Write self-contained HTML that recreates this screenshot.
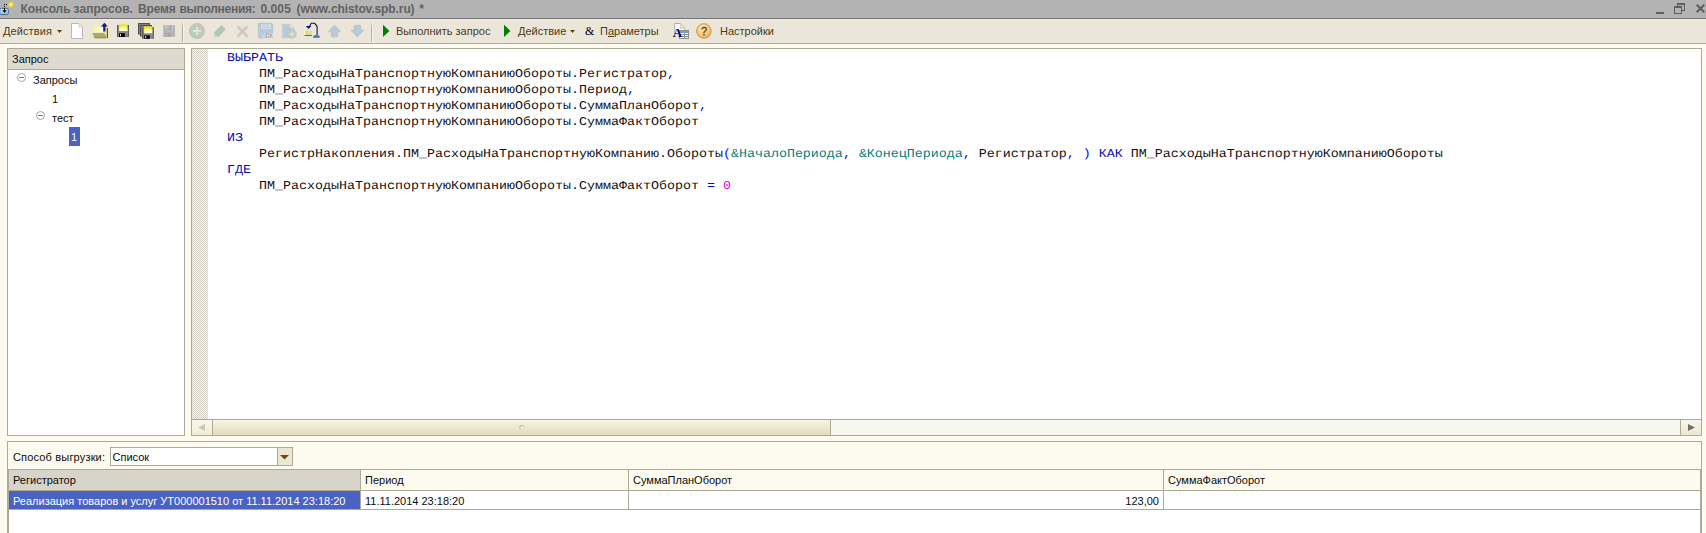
<!DOCTYPE html>
<html lang="ru">
<head>
<meta charset="utf-8">
<title>Консоль запросов</title>
<style>
*{box-sizing:border-box;margin:0;padding:0}
html,body{width:1706px;height:533px;overflow:hidden;background:#fdfbf0}
body{position:relative;font-family:"Liberation Sans",sans-serif;font-size:11px;color:#0c0c0c}
.abs{position:absolute}
.t{position:absolute;white-space:nowrap;line-height:14px;height:14px}
.tb{color:#4b3c14}
#titlebar{left:0;top:0;width:1706px;height:18px;background:#b3b3b3}
#titleline{left:0;top:18px;width:1706px;height:1px;background:#727272}
#title{font-weight:bold;color:#626262;font-size:12px}
#toolbar{left:0;top:19px;width:1706px;height:24px;background:#ece5d9;border-top:1px solid #f1ede4;border-bottom:1px solid #f0ecdd}
#toolline{left:0;top:43px;width:1706px;height:1px;background:#b0aa8f}
.sep{position:absolute;top:22px;width:1px;height:19px;background:#c4bda9}
.bd{border:1px solid #aea995}
#left{left:7px;top:48px;width:178px;height:388px;background:#fff}
#lefthead{left:8px;top:49px;width:176px;height:20px;background:#dedacf}
#leftheadline{left:8px;top:69px;width:176px;height:1px;background:#aea995}
#editor{left:191px;top:48px;width:1511px;height:388px;background:#fff}
#gutter{left:192px;top:49px;width:16px;height:370px;background:#e5e2db;
 background-image:conic-gradient(#d6d2c8 25%,#f6f5f1 0 50%,#d6d2c8 0 75%,#f6f5f1 0);background-size:2px 2px}
#code{left:0;top:0}
.cl{position:absolute;left:211px;height:18px;font-family:"Liberation Mono",monospace;font-size:13.3333px;line-height:18px;white-space:pre;color:#111;transform:scaleY(0.9);transform-origin:0 0;text-rendering:geometricPrecision}
.kw{color:#0a0ab4}.pr{color:#008080}.op{color:#0000ff}.nm{color:#e000e0}
#hs{left:192px;top:419px;width:1509px;height:16px;background:#f8f8f3;border-top:1px solid #aea995}
#hsl{left:192px;top:420px;width:20px;height:15px;background:linear-gradient(#f9f7ec,#f0ecd9)}
#hslb{left:212px;top:420px;width:1px;height:15px;background:#aea995}
#thumb{left:213px;top:420px;width:617px;height:15px;background:linear-gradient(#f8f6ea 0,#f3f0de 2px,#e3ddbc)}
#thumbb{left:830px;top:420px;width:1px;height:15px;background:#aea995}
#hsrb{left:1680px;top:420px;width:1px;height:15px;background:#aea995}
#hsr{left:1681px;top:420px;width:20px;height:15px;background:linear-gradient(#f8f6ea,#ece7d0)}
#bottom{left:7px;top:441px;width:1695px;height:100px;background:#fdfbf0}
#combo{left:110px;top:447px;width:183px;height:19px;background:#fff}
#combobtn{left:277px;top:448px;width:15px;height:17px;background:#ece6d4;border-left:1px solid #aea995}
#table{left:8px;top:469px;width:1694px;height:70px;background:#fff;border-left:1px solid #aea995;border-top:1px solid #aea995;border-right:2px solid #aea995}
#thead{left:9px;top:470px;width:1691px;height:20px;background:#fdfbef}
#th1{left:9px;top:470px;width:351px;height:20px;background:#d8d4c9}
.hl{position:absolute;height:1px;background:#aea995}
.vl{position:absolute;width:1px;background:#aea995}
#sel{left:9px;top:491px;width:351px;height:18px;background:#4962c3}
svg{position:absolute;left:0;top:0;overflow:visible}
</style>
</head>
<body>
<div class="abs" id="titlebar"></div>
<div class="abs" id="titleline"></div>
<div id="title"><span class="t" style="left:20.5px;top:2px;letter-spacing:-0.1px">Консоль</span><span class="t" style="left:73.6px;top:2px;letter-spacing:0.05px">запросов.</span><span class="t" style="left:138px;top:2px;letter-spacing:-0.15px">Время</span><span class="t" style="left:179.4px;top:2px;letter-spacing:-0.27px">выполнения:</span><span class="t" style="left:260.4px;top:2px;letter-spacing:0.1px">0.005</span><span class="t" style="left:296.5px;top:2px;letter-spacing:-0.1px">(www.chistov.spb.ru)</span><span class="t" style="left:419.3px;top:2px;letter-spacing:0px">*</span></div>
<div class="abs" id="toolbar"></div>
<div class="abs" id="toolline"></div>



<div class="t tb" style="left:3px;top:24px;letter-spacing:0.1px">Действия</div>
<div class="t tb" style="left:396px;top:24px">Выполнить запрос</div>
<div class="t tb" style="left:518px;top:24px">Действие</div>
<div class="t" style="left:585px;top:24px;font-family:'Liberation Serif',serif;font-size:12px;color:#000">&amp;</div>
<div class="t tb" style="left:600px;top:24px">П<u>а</u>раметры</div>
<div class="t tb" style="left:720px;top:24px">Настройки</div>

<div class="abs bd" id="left"></div>
<div class="abs" id="lefthead"></div>
<div class="abs" id="leftheadline"></div>
<div class="t" style="left:12px;top:52px">Запрос</div>
<div class="t" style="left:33px;top:73px">Запросы</div>
<div class="t" style="left:52px;top:92px">1</div>
<div class="t" style="left:52px;top:111px">тест</div>
<div class="abs" style="left:69px;top:127px;width:11px;height:19px;background:#4962c3"></div>
<div class="t" style="left:71px;top:130px;color:#fff">1</div>

<div class="abs bd" id="editor"></div>
<div class="abs" id="gutter"></div>
<div class="abs" id="code"><div class="cl" style="top:51px"><span class="kw">  ВЫБРАТЬ</span></div><div class="cl" style="top:67px">      ПМ_РасходыНаТранспортнуюКомпаниюОбороты.Регистратор<span class="op">,</span></div><div class="cl" style="top:83px">      ПМ_РасходыНаТранспортнуюКомпаниюОбороты.Период<span class="op">,</span></div><div class="cl" style="top:99px">      ПМ_РасходыНаТранспортнуюКомпаниюОбороты.СуммаПланОборот<span class="op">,</span></div><div class="cl" style="top:115px">      ПМ_РасходыНаТранспортнуюКомпаниюОбороты.СуммаФактОборот</div><div class="cl" style="top:131px"><span class="kw">  ИЗ</span></div><div class="cl" style="top:147px">      РегистрНакопления.ПМ_РасходыНаТранспортнуюКомпанию.Обороты<span class="op">(</span><span class="pr">&amp;НачалоПериода</span><span class="op">,</span> <span class="pr">&amp;КонецПериода</span><span class="op">,</span> Регистратор<span class="op">,</span> <span class="op">)</span> <span class="kw">КАК</span> ПМ_РасходыНаТранспортнуюКомпаниюОбороты</div><div class="cl" style="top:163px"><span class="kw">  ГДЕ</span></div><div class="cl" style="top:179px">      ПМ_РасходыНаТранспортнуюКомпаниюОбороты.СуммаФактОборот <span class="op">=</span> <span class="nm">0</span></div></div>

<div class="abs" id="hs"></div>
<div class="abs" id="hsl"></div><div class="abs" id="hslb"></div>
<div class="abs" id="thumb"></div><div class="abs" id="thumbb"></div>
<div class="abs" id="hsrb"></div><div class="abs" id="hsr"></div>

<div class="abs bd" id="bottom"></div>
<div class="t" style="left:13px;top:450px;letter-spacing:0.17px">Способ выгрузки:</div>
<div class="abs bd" id="combo"></div>
<div class="abs" id="combobtn"></div>
<div class="t" style="left:112.5px;top:450px">Список</div>

<div class="abs" id="table"></div>
<div class="abs" id="thead"></div>
<div class="abs" id="th1"></div>
<div class="hl" style="left:9px;top:490px;width:1691px"></div>
<div class="hl" style="left:9px;top:509px;width:1691px"></div>
<div class="vl" style="left:360px;top:470px;height:40px"></div>
<div class="vl" style="left:628px;top:470px;height:40px"></div>
<div class="vl" style="left:1163px;top:470px;height:40px"></div>
<div class="abs" id="sel"></div>
<div class="t" style="left:13px;top:473px">Регистратор</div>
<div class="t" style="left:365px;top:473px">Период</div>
<div class="t" style="left:633px;top:473px">СуммаПланОборот</div>
<div class="t" style="left:1168px;top:473px">СуммаФактОборот</div>
<div class="t" style="left:13px;top:494px;color:#fff">Реализация товаров и услуг УТ000001510 от 11.11.2014 23:18:20</div>
<div class="t" style="left:365px;top:494px">11.11.2014 23:18:20</div>
<div class="t" style="left:1060px;top:494px;width:99px;text-align:right">123,00</div>
<svg width="1706" height="533" viewBox="0 0 1706 533">
<defs>
<linearGradient id="gblue" x1="0" y1="0" x2="0" y2="1"><stop offset="0" stop-color="#d6f0ff"/><stop offset="1" stop-color="#86c2e6"/></linearGradient>
<radialGradient id="gyel" cx="0.5" cy="0.95" r="0.85"><stop offset="0" stop-color="#ffffff"/><stop offset="0.35" stop-color="#fdfdc8"/><stop offset="1" stop-color="#e6e61c"/></radialGradient>
<radialGradient id="gorg" cx="0.42" cy="0.35" r="0.75"><stop offset="0" stop-color="#fde8c0"/><stop offset="0.55" stop-color="#f8c878"/><stop offset="1" stop-color="#eea236"/></radialGradient>
<linearGradient id="gsep" x1="0" y1="0" x2="0" y2="1"><stop offset="0" stop-color="#b3ab93" stop-opacity="0.2"/><stop offset="0.35" stop-color="#b3ab93" stop-opacity="1"/><stop offset="1" stop-color="#b3ab93" stop-opacity="0.8"/></linearGradient>
<linearGradient id="gpaper" x1="0" y1="0" x2="1" y2="0"><stop offset="0" stop-color="#f6f6a8"/><stop offset="1" stop-color="#ffffff"/></linearGradient>
</defs>
<!-- toolbar separators -->
<rect x="182" y="22" width="1" height="20" fill="url(#gsep)"/><rect x="183" y="22" width="1" height="20" fill="#f7f3ea"/>
<rect x="371" y="22" width="1" height="20" fill="url(#gsep)"/><rect x="372" y="22" width="1" height="20" fill="#f7f3ea"/>
<!-- title icon -->
<g>
<rect x="-0.3" y="8.3" width="8.6" height="6.3" rx="1.7" fill="url(#gblue)" stroke="#3f6f95" stroke-width="1"/>
<g fill="#000" shape-rendering="crispEdges"><rect x="4" y="4" width="1" height="1"/><rect x="4" y="6" width="1" height="1"/><rect x="4" y="8" width="1" height="1"/><rect x="4" y="9" width="1" height="2"/><rect x="6" y="4" width="1" height="1"/><rect x="8" y="4" width="1" height="1"/></g>
<path d="M2.2 10.2h4.6l-2.3 2.8z" fill="#000"/>
<path d="M10.9 1.1l3.5 3.5-3.5 3.5-3.5-3.5z" fill="#f4de48" stroke="#d2ba58" stroke-width="0.8"/>
<path d="M10.9 2.6l2 2-2 2-2-2z" fill="#f9ea6a"/>
</g>
<!-- window buttons -->
<g fill="#5e5e5e">
<rect x="1656" y="12" width="8" height="2"/>
<path d="M1677 3h8v8h-3v-1h2v-5h-6v1h-1z"/>
<path d="M1674 6h8v8h-8zM1675 8v5h6v-5z" fill-rule="evenodd"/>
</g>
<path d="M1696.7 4.7l7.6 7.6M1704.3 4.7l-7.6 7.6" stroke="#5e5e5e" stroke-width="2" fill="none"/>
<!-- dropdown arrows -->
<path d="M57 30h5l-2.5 3z" fill="#5a4200"/>
<path d="M570 30h5l-2.5 3z" fill="#5a4200"/>
<!-- new doc -->
<path d="M71.5 23.5h7.5l3.5 3.5v11.5h-11z" fill="#fff" stroke="#b8b8b8"/>
<path d="M79 23.5v3.5h3.5" fill="#ececec" stroke="#c8c8c8" stroke-width="0.8"/>
<!-- open folder -->
<g>
<path d="M93.8 26h5.4l1 1.4h3v5.2h-9.4z" fill="#f5f5a2"/>
<path d="M96.5 27.4h6.7v5.2h-6.7z" fill="url(#gpaper)"/>
<path d="M92 32.5h12l3.5 5.5h-13z" fill="#aaaa6a"/>
<path d="M92 32h12v0.9h-12z" fill="#f0f0c4"/>
<path d="M94.5 37.4h13v0.9h-13z" fill="#8a8a50"/>
<path d="M106 28h1v9.8h-1z" fill="#d8d268"/>
<path d="M107 28h1v10h-1z" fill="#5c5a1a"/>
<path d="M104.4 22.7l3.5 3.9h-2.4v4.9h-2.3v-4.9h-2.3z" fill="#1c1c84"/>
</g>
<!-- save -->
<g>
<rect x="117" y="25" width="12" height="12" fill="#8a8a8a"/>
<rect x="117" y="25" width="1" height="12" fill="#5c5c5c"/><rect x="128" y="25" width="1" height="12" fill="#5c5c5c"/><rect x="117" y="36.3" width="12" height="0.7" fill="#6a6a6a"/>
<rect x="119" y="24.3" width="8.6" height="6.7" fill="url(#gyel)"/>
<rect x="119" y="33.2" width="5.8" height="3.8" fill="#000"/>
<rect x="120" y="34" width="1" height="2.2" fill="#d8d8d8"/>
</g>
<!-- save all -->
<g>
<rect x="138" y="23" width="12" height="11.5" fill="#4e4e4e"/>
<rect x="139" y="24" width="10" height="10" fill="#80808c"/>
<rect x="140" y="25" width="12" height="11.5" fill="#4e4e4e"/>
<rect x="141" y="26" width="10" height="10" fill="#808088"/>
<rect x="142.3" y="27" width="11.5" height="11.8" fill="#8a8a8a"/>
<rect x="142.3" y="27" width="1" height="11.8" fill="#4e4e4e"/><rect x="152.8" y="27" width="1" height="11.8" fill="#5c5c5c"/>
<rect x="143.8" y="26.3" width="8.5" height="6.9" fill="url(#gyel)"/>
<rect x="144.2" y="35.3" width="5.6" height="3.5" fill="#000"/>
<rect x="145.2" y="36" width="1" height="2.2" fill="#d8d8d8"/>
</g>
<!-- save as disabled -->
<g>
<rect x="163.2" y="25.2" width="11.8" height="11.6" fill="#b4b4b4"/>
<rect x="165" y="25.2" width="8.4" height="6" fill="#c2c2c2"/>
<path d="M165.5 31l5.2-5.6M170.8 25.5v5.5M167.6 29.3h3.4" stroke="#a2a2b0" stroke-width="1" fill="none"/>
<rect x="165.7" y="33.2" width="5" height="3.4" fill="#a2a2a2"/>
<rect x="166.5" y="33.8" width="1" height="2.4" fill="#c6c6c6"/>
</g>
<!-- add (disabled) -->
<circle cx="197" cy="31" r="7.5" fill="#becdbb" stroke="#b2c3ae" stroke-width="0.9"/>
<path d="M197 27v8M193 31h8" stroke="#e0e8dd" stroke-width="1.8" fill="none"/>
<!-- pencil disabled -->
<path d="M214 37v-4.5l7.4-7.5 4.3 4.3-7.2 7.7z" fill="#b2c4b2"/>
<path d="M214 37v-4.5l4.5 4.5z" fill="#c6d6c6"/>
<!-- delete X disabled -->
<path d="M238.3 27.3l8.4 8.4M246.7 27.3l-8.4 8.4" stroke="#d4c7c3" stroke-width="2.7" stroke-linecap="round" fill="none"/>
<!-- save OK disabled -->
<g>
<path d="M258.3 23.2h13.3l1.2 1.2v8h-6.4v5.6h-7.3l-0.8-0.8z" fill="#b9c9d5" stroke="#abbdcc" stroke-width="0.6"/>
<rect x="261" y="24.2" width="10" height="4.8" fill="#d2dde6"/>
<path d="M262.5 25.7h7M262.5 27.5h7" stroke="#bfcdd8" stroke-width="0.9"/>
<rect x="262.6" y="33" width="2.6" height="4.4" fill="#d6e0e8"/>
<rect x="263.4" y="33.4" width="1" height="2" fill="#9fb3c6"/>
<text x="265.8" y="37.8" font-family="Liberation Sans, sans-serif" font-size="6.4" font-weight="bold" fill="#95aac0" textLength="7.2" lengthAdjust="spacingAndGlyphs">OK</text>
</g>
<!-- doc+ disabled -->
<g>
<path d="M282.3 24.3h8l3.4 3.4v10h-11.4z" fill="#c3cfda" stroke="#b2c1ce" stroke-width="0.6"/>
<path d="M290.3 24.3v3.4h3.4z" fill="#dce4ec"/>
<path d="M284 27h5M284 29h7M284 31h6M284 33h4M284 35h3" stroke="#acbdd0" stroke-width="0.9"/>
<circle cx="292" cy="34" r="4.75" fill="#bdcbba"/>
<path d="M292 31.3v5.4M289.3 34h5.4" stroke="#dde5d9" stroke-width="1.5"/>
</g>
<!-- move icon -->
<g>
<rect x="304.2" y="29.7" width="7.6" height="6.2" fill="#e0dc98"/>
<rect x="304.2" y="29.7" width="7.6" height="0.9" fill="#f8f8c4"/><rect x="304.2" y="29.7" width="0.9" height="6.2" fill="#f8f8c4"/>
<rect x="304.6" y="35" width="7.2" height="1" fill="#726a22"/>
<path d="M309 27.2l2.2-3.9h3.5l2.4 3v8.8" stroke="#10104e" stroke-width="1.1" fill="none"/>
<path d="M305.8 26.1h5.6l-2.9 2.9z" fill="#10108a"/>
<path d="M313.9 35.2h5.2l0.8 2.6h-6.8z" fill="#3a72aa"/>
</g>
<!-- up / down disabled -->
<path d="M334.4 25l6.5 6.8h-3.1v4.2q0 1-1 1h-4.6q-1 0-1-1v-4.2h-3.2z" fill="#b9c9d5" stroke="#aabbc8" stroke-width="0.5"/>
<path d="M355.1 25.2h4.6q1 0 1 1v3.9h3.1l-6.4 6.8-6.6-6.8h3.3v-3.9q0-1 1-1z" fill="#b9c9d5" stroke="#aabbc8" stroke-width="0.5"/>
<!-- play -->
<path d="M383 24.7v12.3l6.4-6.1z" fill="#008000"/>
<path d="M504 24.7v12.3l6.4-6.1z" fill="#008000"/>
<!-- doc A table -->
<g>
<path d="M674.7 23.5h5.6l4.4 4.4v6h-10z" fill="#fff" stroke="#a4a4a4" stroke-width="0.9"/>
<path d="M680.3 23.5v4.4h4.4" fill="#ececf0" stroke="#b4b4b4" stroke-width="0.6"/>
<path d="M680 28.3h3.2" stroke="#f0b48c" stroke-width="0.7"/>
<rect x="679" y="30" width="10" height="9" fill="#8e8e8e"/>
<rect x="680" y="31" width="8" height="2" fill="#74a4bc"/>
<rect x="680" y="33" width="4" height="1" fill="#fff"/><rect x="685" y="33" width="3" height="1" fill="#fff"/>
<rect x="680" y="35" width="4" height="1" fill="#fff"/><rect x="685" y="35" width="3" height="1" fill="#fff"/>
<rect x="680" y="37" width="4" height="1" fill="#fff"/><rect x="685" y="37" width="3" height="1" fill="#fff"/>
<text x="672.8" y="37" font-family="Liberation Serif, serif" font-size="12" font-weight="bold" fill="#00007c" textLength="9.4" lengthAdjust="spacingAndGlyphs">A</text>
</g>
<!-- help -->
<circle cx="703.9" cy="31" r="7.3" fill="url(#gorg)" stroke="#c4924a" stroke-width="0.9"/>
<text x="704" y="35" text-anchor="middle" font-family="Liberation Sans, sans-serif" font-size="11" fill="#5a3c10" stroke="#5a3c10" stroke-width="0.3">?</text>
<!-- tree toggles -->
<g fill="#fff" stroke="#a6a6a6" stroke-width="1">
<circle cx="21.5" cy="77.5" r="4"/>
<circle cx="40.5" cy="115.5" r="4"/>
</g>
<path d="M19 77.5h5M38 115.5h5" stroke="#7a7a7a" stroke-width="1"/>
<!-- scrollbar arrows -->
<path d="M205 424v7l-7-3.5z" fill="#c9c7bc"/>
<path d="M1688 424v7l7-3.5z" fill="#6e6e6e"/>
<circle cx="521.5" cy="427.5" r="2.4" fill="#cbc7ac"/>
<circle cx="522" cy="428" r="1.6" fill="#f4f1e2"/>
<!-- combo arrow -->
<path d="M280 455h9l-4.5 4.5z" fill="#6a4e00"/>
</svg>

</body>
</html>
